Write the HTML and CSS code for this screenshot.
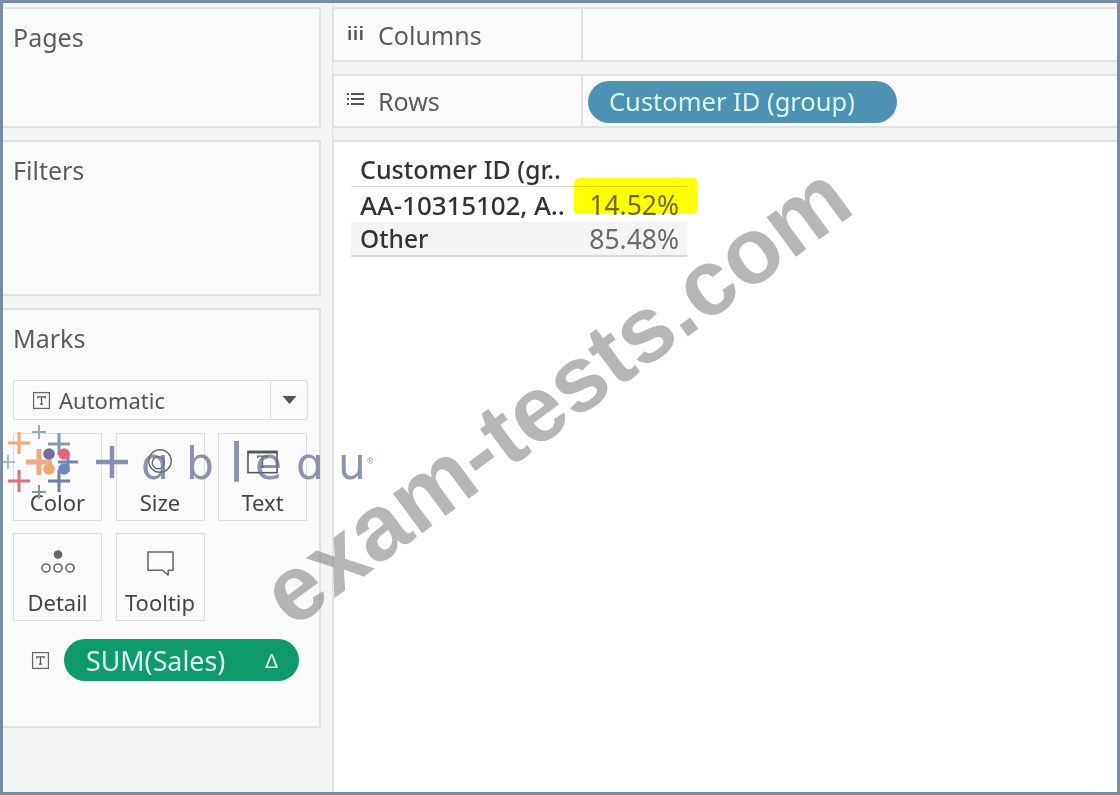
FILE: index.html
```html
<!DOCTYPE html>
<html lang="en">
<head>
<meta charset="utf-8">
<title>Tableau worksheet</title>
<link rel="stylesheet" href="styles.css">
</head>
<body>
<div class="frame">
  <aside class="side">
    <section class="panel pages"><h2 class="panel-title">Pages</h2></section>
    <section class="panel filters"><h2 class="panel-title">Filters</h2></section>
    <section class="panel marks">
      <h2 class="panel-title">Marks</h2>
      <div class="mark-select">
        <svg class="t-icon" viewBox="0 0 18 18"><rect x="1.5" y="1.5" width="15" height="15" fill="none" stroke="#666" stroke-width="1.2"/><path d="M5.5 7V5.5h7V7M9 5.5v7M7.5 12.5h3" fill="none" stroke="#555" stroke-width="1.2"/></svg>
        <span class="mark-name">Automatic</span>
        <span class="mark-caret"><svg viewBox="0 0 14 8" class="caret"><path d="M0 0h14L7 8z" fill="#555"/></svg></span>
      </div>
      <div class="cards">
        <div class="card"><span class="card-icon"></span><span class="card-label">Color</span></div>
        <div class="card"><span class="card-icon"><svg class="icon-size" viewBox="0 0 30 30"><circle cx="15" cy="15" r="13" fill="none" stroke="#666" stroke-width="1.6"/><circle cx="13" cy="17" r="7" fill="none" stroke="#666" stroke-width="1.6"/></svg></span><span class="card-label">Size</span></div>
        <div class="card"><span class="card-icon"><svg class="icon-text" viewBox="0 0 32 24"><rect x="1" y="1" width="30" height="22" fill="none" stroke="#555" stroke-width="1.6"/><path d="M1 2h30" stroke="#555" stroke-width="2.4"/><path d="M11 8V6h10v2M16 6v11M14 17h4" fill="none" stroke="#666" stroke-width="1.4"/></svg></span><span class="card-label">Text</span></div>
        <div class="card"><span class="card-icon"><svg class="icon-detail" viewBox="0 0 34 24"><circle cx="17" cy="4.500" r="4.300" fill="#666"/><circle cx="5" cy="18" r="4" fill="none" stroke="#666" stroke-width="1.600"/><circle cx="17" cy="18" r="4" fill="none" stroke="#666" stroke-width="1.600"/><circle cx="29" cy="18" r="4" fill="none" stroke="#666" stroke-width="1.600"/></svg></span><span class="card-label">Detail</span></div>
        <div class="card"><span class="card-icon"><svg class="icon-tip" viewBox="0 0 30 28"><path d="M2 2h26v19h-5v5l-6-5H2z" fill="none" stroke="#666" stroke-width="1.6" stroke-linejoin="round"/></svg></span><span class="card-label">Tooltip</span></div>
      </div>
      <div class="mark-field">
        <svg class="t-icon" viewBox="0 0 18 18"><rect x="1.5" y="1.5" width="15" height="15" fill="none" stroke="#666" stroke-width="1.2"/><path d="M5.5 7V5.5h7V7M9 5.5v7M7.5 12.5h3" fill="none" stroke="#555" stroke-width="1.2"/></svg>
        <div class="pill pill-green"><span>SUM(Sales)</span><span class="delta">&#916;</span></div>
      </div>
    </section>
  </aside>
  <main class="main">
    <div class="shelf">
      <div class="shelf-head">
        <svg class="shelf-icon" viewBox="0 0 16 14"><path d="M1 0h2.400v2H1zM1 4h2.400v10H1zM6.800 0h2.400v2H6.800zM6.800 4h2.400v10H6.800zM12.600 0H15v2h-2.400zM12.600 4H15v10h-2.400z" fill="#555"/></svg>
        <span>Columns</span>
      </div>
      <div class="shelf-body"></div>
    </div>
    <div class="shelf shelf-rows">
      <div class="shelf-head">
        <svg class="shelf-icon" viewBox="0 0 17 14"><path d="M0 1h2v2H0zM4 1h13v2H4zM0 6h2v2H0zM4 6h13v2H4zM0 11h2v2H0zM4 11h13v2H4z" fill="#555"/></svg>
        <span>Rows</span>
      </div>
      <div class="shelf-body"><div class="pill pill-blue">Customer ID (group)</div></div>
    </div>
    <div class="view">
      <div class="table">
        <div class="row row-head"><span class="cell-name">Customer ID (gr..</span><span></span></div>
        <div class="row"><span class="cell-name cell-code">AA-10315102, A..</span><span class="cell-val">14.52%</span></div>
        <div class="row row-alt"><span class="cell-name cell-other">Other</span><span class="cell-val">85.48%</span></div>
      </div>
    </div>
  </main>
  <div class="highlight"></div>
  <div class="logo">
    <svg class="logo-mark" viewBox="0 0 130 80">
      <g fill="none" stroke-linecap="butt">
        <path d="M8 23h22M19 12v22" stroke="#f0a675" stroke-width="3"/>
        <path d="M32 12h14M39 5v14" stroke="#8eb0bd" stroke-width="2"/>
        <path d="M48 24h22M59 13v22" stroke="#7f9cb0" stroke-width="3"/>
        <path d="M1 42h14M8 35v14" stroke="#9cc0c8" stroke-width="2"/>
        <path d="M26 42h26M39 29v26" stroke="#efaa85" stroke-width="5"/>
        <path d="M58 42h20M68 32v20" stroke="#7388ad" stroke-width="3"/>
        <path d="M8 61h22M19 50v22" stroke="#d9707f" stroke-width="3"/>
        <path d="M48 61h22M59 50v22" stroke="#6d7da6" stroke-width="3"/>
        <path d="M32 72h14M39 65v14" stroke="#8298ad" stroke-width="2"/>
        <path d="M96 42h32M112 26v32" stroke="#8790b0" stroke-width="4.500"/>
      </g>
      <circle cx="49" cy="34" r="5.800" fill="#7b6a9b"/>
      <circle cx="64" cy="34" r="5.800" fill="#e8637a"/>
      <circle cx="49" cy="49" r="5.800" fill="#eda76f"/>
      <circle cx="64" cy="49" r="5.800" fill="#6689bf"/>
    </svg>
    <span class="logo-word">ɑ</span>
    <span class="logo-word">b</span>
    <span class="logo-word">l</span>
    <span class="logo-word">e</span>
    <span class="logo-word">ɑ</span>
    <span class="logo-word">u</span>
    <span class="logo-reg">®</span>
  </div>
  <div class="watermark">exam-tests.com</div>
</div>
</body>
</html>
```
FILE: styles.css
```css
* { box-sizing: border-box; }
html, body { margin: 0; padding: 0; background: #fff; }
body { font-family: "Noto Sans", "Open Sans", sans-serif; color: #555; }

.frame {
  position: relative;
  display: flex;
  width: 1120px;
  height: 795px;
  border: 3px solid #7a8ca2;
  overflow: hidden;
  background: #f5f5f5;
}

.side {
  width: 330px;
  flex: none;
  display: flex;
  flex-direction: column;
  gap: 12px;
  padding: 4px 11px 0 0;
  border-right: 1px solid #e2e2e2;
}
.panel {
  background: #fbfbfb;
  border: 2px solid #e2e2e2;
  border-left: 0;
  padding: 0 11px 0 10px;
}
.pages { height: 121px; }
.filters { height: 156px; }
.marks { height: 420px; }
.panel-title {
  margin: 0;
  padding-top: 13px;
  font-size: 25px;
  line-height: 31px;
  font-weight: 400;
  color: #5c5c5c;
}

.mark-select {
  display: flex;
  align-items: center;
  height: 40px;
  margin-top: 26px;
  border: 1px solid #dcdcdc;
  border-radius: 2px;
  padding-left: 18px;
  background: #fbfbfb;
  color: #555;
  font-size: 22px;
}
.t-icon { width: 19px; height: 19px; flex: none; }
.mark-name { margin-left: 8px; flex: 1; }
.mark-caret {
  width: 37px;
  height: 100%;
  border-left: 1px solid #dcdcdc;
  display: flex;
  align-items: center;
  justify-content: center;
}
.caret { width: 15px; height: 8px; }

.cards {
  display: grid;
  grid-template-columns: 89px 89px 89px;
  grid-auto-rows: 88px;
  column-gap: 13.5px;
  row-gap: 12px;
  margin-top: 13px;
}
.card {
  border: 1px solid #dedede;
  background: #fbfbfb;
  display: flex;
  flex-direction: column;
  align-items: center;
}
.card-icon {
  height: 53px;
  display: flex;
  align-items: center;
  justify-content: center;
}
.card-label { font-size: 22px; line-height: 30px; color: #444; }
.icon-size { width: 26px; height: 26px; margin-top: 1px; }
.icon-text { width: 31px; height: 24px; margin-top: 2px; }
.icon-detail { width: 34px; height: 24px; margin-top: 3px; }
.icon-tip { width: 29px; height: 27px; margin-top: 6px; }

.mark-field {
  display: flex;
  align-items: center;
  margin-top: 18px;
  padding-left: 18px;
}
.mark-field .t-icon { margin-right: 14px; }

.pill {
  display: flex;
  align-items: center;
  border-radius: 21px;
  height: 42px;
  color: #dff5f5;
}
.pill-green {
  width: 235px;
  padding: 0 21px 0 22px;
  justify-content: space-between;
  background: #0f9a6c;
  font-size: 26.800px;
}
.delta { font-size: 20px; }
.pill-blue {
  width: 309px;
  margin: 2px 0 0 1px;
  padding: 0 0 2px 21px;
  background: #4c93b3;
  font-size: 25.500px;
}

.main {
  flex: 1;
  min-width: 0;
  display: flex;
  flex-direction: column;
  gap: 12px;
  padding-top: 4px;
}
.shelf {
  height: 55px;
  display: flex;
  background: #fbfbfb;
  border-top: 2px solid #e2e2e2;
  border-bottom: 2px solid #e2e2e2;
  border-left: 1px solid #e2e2e2;
}
.shelf-rows { height: 54px; }
.shelf-head {
  width: 249px;
  flex: none;
  display: flex;
  align-items: center;
  padding-left: 13px;
  border-right: 2px solid #e2e2e2;
  font-size: 25px;
  color: #5c5c5c;
}
.shelf-icon { width: 17px; height: 14px; margin-right: 14px; margin-top: -4px; }
.shelf-body { flex: 1; display: flex; align-items: center; padding-left: 4px; }

.view {
  flex: 1;
  background: #fff;
  border-top: 2px solid #e2e2e2;
  border-left: 1px solid #e2e2e2;
  padding: 10px 0 0 17px;
}
.table { width: 336px; font-size: 25px; }
.row {
  display: flex;
  justify-content: space-between;
  align-items: center;
  height: 35px;
  padding: 0 8px 0 9px;
}
.row-head { border-bottom: 1px solid #d8d8d8; }
.row-alt { background: #f5f5f5; border-bottom: 2px solid #d8d8d8; }
.cell-name { color: #333; font-weight: 500; white-space: nowrap; }
.cell-code { font-size: 26px; letter-spacing: -0.1px; }
.cell-other { font-size: 24.500px; }
.cell-val { color: #6a6a6a; font-size: 26.500px; }

.highlight {
  position: absolute;
  left: 571px;
  top: 175px;
  width: 123px;
  height: 36px;
  background: #ffff00;
  border-radius: 6px 3px 5px 3px;
  mix-blend-mode: multiply;
}

.logo {
  position: absolute;
  left: -3px;
  top: 417px;
  width: 400px;
  height: 80px;
  pointer-events: none;
}
.logo-mark { position: absolute; left: 0; top: 0; width: 130px; height: 80px; }
.logo-word {
  position: absolute;
  top: 19px;
  font-family: "DejaVu Sans", sans-serif;
  font-size: 44px;
  line-height: 50px;
  color: rgba(95, 105, 150, 0.72);
}
.logo-word:nth-of-type(1) { left: 141px; }
.logo-word:nth-of-type(2) { left: 186px; }
.logo-word:nth-of-type(3) { left: 229px; font-size: 54px; }
.logo-word:nth-of-type(4) { left: 255px; }
.logo-word:nth-of-type(5) { left: 296px; }
.logo-word:nth-of-type(6) { left: 338px; }
.logo-reg {
  position: absolute;
  left: 367px;
  top: 36px;
  font-size: 8px;
  line-height: 10px;
  color: #9aa0b8;
}

.watermark {
  position: absolute;
  left: 553px;
  top: 392px;
  transform: translate(-50%, -50%) rotate(-36.500deg);
  font-family: "Liberation Sans", Arial, sans-serif;
  font-weight: 700;
  font-size: 93px;
  line-height: 1;
  white-space: nowrap;
  color: rgba(110, 110, 110, 0.5);
}
```
